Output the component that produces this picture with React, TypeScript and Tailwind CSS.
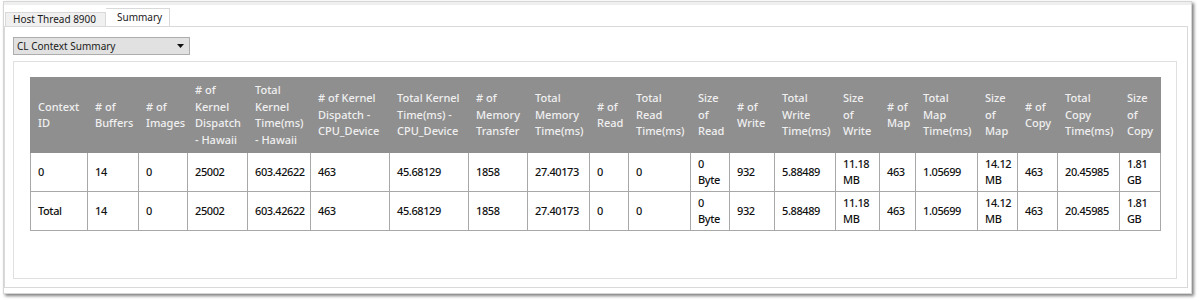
import React from "react";

type Cell = string | [string, string];

const headers: string[][] = [
  ["Context", "ID"],
  ["# of", "Buffers"],
  ["# of", "Images"],
  ["# of", "Kernel", "Dispatch", "- Hawaii"],
  ["Total", "Kernel", "Time(ms)", "- Hawaii"],
  ["# of Kernel", "Dispatch -", "CPU_Device"],
  ["Total Kernel", "Time(ms) -", "CPU_Device"],
  ["# of", "Memory", "Transfer"],
  ["Total", "Memory", "Time(ms)"],
  ["# of", "Read"],
  ["Total", "Read", "Time(ms)"],
  ["Size", "of", "Read"],
  ["# of", "Write"],
  ["Total", "Write", "Time(ms)"],
  ["Size", "of", "Write"],
  ["# of", "Map"],
  ["Total", "Map", "Time(ms)"],
  ["Size", "of", "Map"],
  ["# of", "Copy"],
  ["Total", "Copy", "Time(ms)"],
  ["Size", "of", "Copy"],
];

const widths = [57, 51, 49, 60, 63, 79, 79, 59, 62, 39, 62, 39, 45, 61, 44, 36, 62, 40, 40, 62, 41];

const rowValues = (id: string): Cell[] => [
  id, "14", "0", "25002", "603.42622", "463", "45.68129", "1858", "27.40173", "0", "0",
  ["0", "Byte"], "932", "5.88489", ["11.18", "MB"], "463", "1.05699", ["14.12", "MB"], "463",
  "20.45985", ["1.81", "GB"],
];

const rows = [rowValues("0"), rowValues("Total")];

export default function App() {
  return (
    <div className="w-[1199px] h-[301px] bg-white pl-[3px] pt-[1px] font-['Noto_Sans',sans-serif]">
      <div className="w-[1189px] h-[293px] bg-white border border-[#d6d6d6] shadow-[2px_2px_3px_rgba(0,0,0,0.5)] flex flex-col">
        <div className="h-[3px] bg-[#efefef]" />
        {/* tabs */}
        <div className="h-[21px] flex items-end pl-[1px] text-[10px] text-[#1a1a1a] leading-none">
          <div className="h-[14px] w-[101px] bg-[#f0f0f0] border border-b-0 border-[#d9d9d9] pl-[7px] pb-[1px] flex items-center">
            Host Thread 8900
          </div>
          <div className="h-[19px] w-[64px] bg-white border border-b-0 border-[#d9d9d9] border-l-0 pl-[11px] pb-[2px] flex items-center -mb-[1px]">
            Summary
          </div>
        </div>
        {/* panel */}
        <div className="mr-[3px] mb-[5px] flex-1 border border-[#d9d9d9] bg-white pl-[8px] pr-[9px] pt-[10px] flex flex-col">
          <div className="w-[177px] h-[18px] bg-[#e1e1e1] border border-[#adadad] flex items-center justify-between pl-[3px] pr-[5px] text-[10px] text-[#1a1a1a] leading-none">
            <span>CL Context Summary</span>
            <svg width="7" height="4" viewBox="0 0 7 4">
              <path d="M0 0H7L3.5 4Z" fill="#111" />
            </svg>
          </div>
          <div className="mt-[6px] w-[1164px] h-[218px] border border-[#e0e0e0] pl-[16px] pt-[15px]">
            <table className="table-fixed border-collapse text-[11px] leading-[16.5px] font-medium" style={{ width: 1130 }}>
              <colgroup>
                {widths.map((w, i) => (
                  <col key={i} style={{ width: w }} />
                ))}
              </colgroup>
              <thead>
                <tr className="h-[75px] bg-[#8f8f8f] text-[#f0f0f0]">
                  {headers.map((h, i) => (
                    <th key={i} className="font-medium text-left align-middle pl-[7px] pr-0 border border-[#8f8f8f] whitespace-nowrap">
                      {h.map((line, j) => (
                        <div key={j}>{line}</div>
                      ))}
                    </th>
                  ))}
                </tr>
              </thead>
              <tbody>
                {rows.map((r, ri) => (
                  <tr key={ri} className="h-[39px] text-[#111]">
                    {r.map((c, ci) => (
                      <td key={ci} className="border border-[#a8a8a8] pl-[7px] align-middle whitespace-nowrap tracking-[-0.4px]">
                        {typeof c === "string" ? (
                          c
                        ) : (
                          <>
                            <div>{c[0]}</div>
                            <div>{c[1]}</div>
                          </>
                        )}
                      </td>
                    ))}
                  </tr>
                ))}
              </tbody>
            </table>
          </div>
        </div>
      </div>
    </div>
  );
}
